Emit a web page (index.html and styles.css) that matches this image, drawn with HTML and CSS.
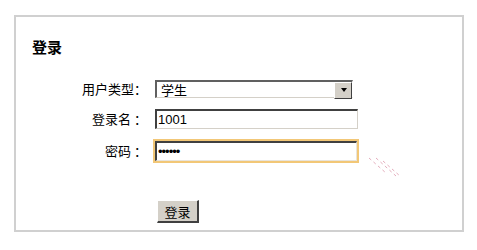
FILE: index.html
```html
<!DOCTYPE html>
<html lang="zh-CN">
<head>
<meta charset="utf-8">
<title>登录</title>
<link rel="stylesheet" href="styles.css">
</head>
<body>
<div class="panel">
  <h2 class="title">登录</h2>
  <form class="form">
    <div class="row row-type">
      <label class="label" for="utype">用户类型：</label>
      <span class="select-wrap"><select id="utype" class="select"><option>学生</option><option>教师</option></select></span>
    </div>
    <div class="row row-name">
      <label class="label" for="uname">登录名 ：</label>
      <input id="uname" class="field" type="text" value="1001">
    </div>
    <div class="row row-pass">
      <label class="label" for="upass">密码 ：</label>
      <input id="upass" class="field focused" type="password" value="123456" autofocus>
    </div>
    <div class="row row-btn">
      <span class="label"></span>
      <button type="button" class="btn">登录</button>
    </div>
  </form>
  <svg class="hatch" width="34" height="32" viewBox="0 0 34 32" aria-hidden="true">
    <g stroke="#e4aebd" stroke-width="1" stroke-dasharray="3 3" fill="none">
      <line x1="1" y1="6" x2="18" y2="21"/>
      <line x1="8" y1="6" x2="28" y2="24"/>
      <line x1="15" y1="9" x2="32" y2="24"/>
    </g>
  </svg>
</div>
</body>
</html>
```
FILE: styles.css
```css
* { box-sizing: border-box; }
html, body { margin: 0; padding: 0; background: #fff; }
body {
  font-family: "Noto Sans CJK SC", "Liberation Sans", sans-serif;
  font-size: 13px;
  color: #000;
}
.panel {
  position: relative;
  margin: 15px 0 0 14px;
  width: 450px;
  height: 217px;
  border: 2px solid #d0d0d0;
  padding: 20px 0 0 16px;
}
.title {
  margin: 0;
  font-size: 15px;
  font-weight: bold;
  line-height: 20px;
}
.form {
  display: flex;
  flex-direction: column;
  margin-top: 23px;
}
.row {
  display: flex;
  align-items: center;
  gap: 8px;
}
.row-name { margin-top: 11px; }
.row-pass { margin-top: 12px; }
.row-btn { margin-top: 39px; }
.label {
  flex: 0 0 115px;
  text-align: right;
  line-height: 16px;
  white-space: nowrap;
  margin-right: -3px;
}
.select-wrap {
  position: relative;
  display: block;
  width: 198px;
  height: 18px;
  margin-left: 3px;
}
.select {
  -webkit-appearance: none;
  appearance: none;
  display: block;
  width: 198px;
  height: 18px;
  margin: 0;
  padding: 0 0 0 4px;
  font: 13px "Noto Sans CJK SC", sans-serif;
  line-height: 14px;
  color: #000;
  background: #fff;
  border-style: solid;
  border-width: 2px 1px 1px 2px;
  border-color: #606060 #ffffff #d4d0c8 #606060;
  border-radius: 0;
  outline: none;
}
.select-wrap::after {
  content: "";
  position: absolute;
  top: 2px;
  right: 1px;
  width: 16px;
  height: 15px;
  background: #d4d0c8;
  border-style: solid;
  border-width: 1px;
  border-color: #fff #404040 #404040 #fff;
}
.select-wrap::before {
  content: "";
  position: absolute;
  z-index: 1;
  top: 8px;
  right: 6px;
  width: 0;
  height: 0;
  border-left: 3px solid transparent;
  border-right: 3px solid transparent;
  border-top: 4px solid #000;
}
.field {
  display: block;
  width: 203px;
  height: 20px;
  margin: 0 0 0 3px;
  padding: 0 0 0 1px;
  font: 13px "Liberation Sans", Arial, sans-serif;
  color: #000;
  background: #fff;
  border-style: solid;
  border-width: 2px 1px 1px 2px;
  border-color: #404040 #d4d0c8 #d4d0c8 #404040;
  border-radius: 0;
  outline: none;
  caret-color: #000;
}
.field.focused {
  width: 202px;
  box-shadow: 0 0 0 2px #f2c777;
  border-color: #404040 #e8e4dc #e8e4dc #404040;
  letter-spacing: -1px;
}
.btn {
  display: block;
  width: 42px;
  height: 23px;
  margin: 0 0 0 5px;
  padding: 0;
  font: 13px "Noto Sans CJK SC", sans-serif;
  color: #000;
  background: #d4d0c8;
  border-style: solid;
  border-width: 1px 2px 2px 1px;
  border-color: #ffffff #404040 #404040 #ffffff;
  border-radius: 0;
}
.hatch {
  position: absolute;
  left: 352px;
  top: 135px;
}
```
